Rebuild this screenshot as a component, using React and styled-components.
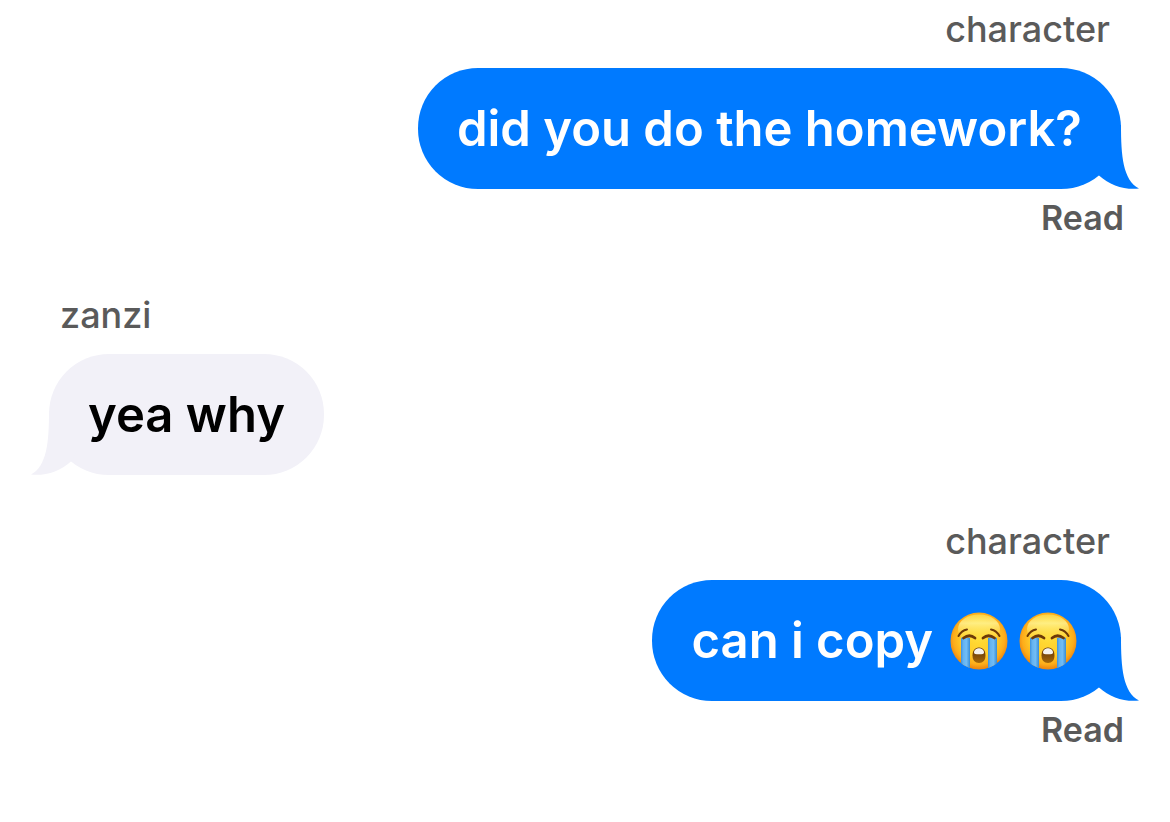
import React from "react";
import styled, { createGlobalStyle } from "styled-components";

const GlobalStyle = createGlobalStyle`
  body {
    margin: 0;
    background: #ffffff;
    font-family: Inter, "Liberation Sans", sans-serif;
    -webkit-font-smoothing: antialiased;
  }
`;

const Conversation = styled.main`
  display: flex;
  flex-direction: column;
  gap: 46px;
  padding: 9px 46px;
`;

const Message = styled.article`
  display: flex;
  flex-direction: column;
  align-items: ${(p) => (p.$sent ? "flex-end" : "flex-start")};
`;

const Sender = styled.span`
  padding: 0 14px;
  margin-bottom: 19px;
  color: #5a5a5a;
  font-size: 36px;
  font-weight: 500;
  line-height: 40px;
`;

const Bubble = styled.div`
  position: relative;
  box-sizing: border-box;
  margin: 0 3px;
  min-height: 121px;
  padding: 30px 39px;
  border-radius: 60px;
  background: ${(p) => (p.$sent ? "#007aff" : "#f2f1f8")};
  color: ${(p) => (p.$sent ? "#ffffff" : "#000000")};
`;

const BubbleText = styled.p`
  display: flex;
  align-items: center;
  gap: 12px;
  margin: 0;
  font-size: 49px;
  font-weight: 600;
  line-height: 61px;
`;

const TailShape = styled.svg`
  position: absolute;
  bottom: 0;
  ${(p) => (p.$sent ? "right: -18px;" : "left: -18px; transform: scaleX(-1);")}
  width: 60px;
  height: 64px;
  fill: ${(p) => (p.$sent ? "#007aff" : "#f2f1f8")};
`;

const Status = styled.span`
  margin: 9px 0 11px;
  color: #5a5a5a;
  font-size: 34px;
  font-weight: 600;
  line-height: 40px;
`;

const EmojiRow = styled.span`
  display: flex;
  gap: 11px;
  padding: 0 5px;
`;

const EmojiArt = styled.svg`
  display: block;
  width: 58px;
  height: 58px;
`;

function Tail({ sent }) {
  return (
    <TailShape $sent={sent} viewBox="0 0 60 64" aria-hidden="true">
      <path d="M42 0C42 31 44 55 60 63.6C45 65 31 60.5 20 50.5L14 40V0Z" />
    </TailShape>
  );
}

function CryingFace({ id }) {
  const face = `face-${id}`;
  const shine = `shine-${id}`;
  const tear = `tear-${id}`;
  const mouth = `mouth-${id}`;
  const clip = `clip-${id}`;
  return (
    <EmojiArt viewBox="0 0 58 58" role="img" aria-label="loudly crying face">
      <defs>
        <radialGradient id={face} cx="0.5" cy="0.46" r="0.55">
          <stop offset="0" stopColor="#ffdc35" />
          <stop offset="0.55" stopColor="#ffcd2a" />
          <stop offset="0.82" stopColor="#fdac1a" />
          <stop offset="1" stopColor="#e87d0e" />
        </radialGradient>
        <linearGradient id={shine} x1="0" y1="0" x2="0" y2="1">
          <stop offset="0" stopColor="#fff36a" stopOpacity="0.5" />
          <stop offset="0.3" stopColor="#fff9a0" stopOpacity="0.75" />
          <stop offset="1" stopColor="#ffe14a" stopOpacity="0" />
        </linearGradient>
        <linearGradient id={tear} x1="0" y1="0" x2="1" y2="0">
          <stop offset="0" stopColor="#3c91dc" />
          <stop offset="0.25" stopColor="#63b2f1" />
          <stop offset="0.6" stopColor="#72bdf5" />
          <stop offset="1" stopColor="#378cd5" />
        </linearGradient>
        <linearGradient id={mouth} x1="0" y1="0" x2="0" y2="1">
          <stop offset="0" stopColor="#5a2d08" />
          <stop offset="1" stopColor="#a66909" />
        </linearGradient>
        <clipPath id={clip}>
          <circle cx="29" cy="29" r="28.5" />
        </clipPath>
      </defs>
      <circle cx="29" cy="29" r="28.5" fill={`url(#${face})`} />
      <ellipse cx="29" cy="17" rx="21" ry="14.5" fill={`url(#${shine})`} />
      <g clipPath={`url(#${clip})`}>
        <path d="M11 26Q15 24 20 26V58H11Z" fill={`url(#${tear})`} />
        <path d="M38 26Q43 24 47 26V58H38Z" fill={`url(#${tear})`} />
      </g>
      <g fill="none" stroke="#6d3908" strokeLinecap="round">
        <path d="M8.5 24Q11.5 18.5 17 17.5" strokeWidth="2" />
        <path d="M49.5 24Q46.5 18.5 41 17.5" strokeWidth="2" />
        <path d="M13.5 26Q19.5 21.5 25 26" strokeWidth="2.8" />
        <path d="M33 26Q38.5 21.5 44.5 26" strokeWidth="2.8" />
      </g>
      <path
        d="M29 35.5C33.5 35.5 35.5 39.2 35.5 43.5C35.5 48.2 33 51 29 51C25 51 22.5 48.2 22.5 43.5C22.5 39.2 24.5 35.5 29 35.5Z"
        fill={`url(#${mouth})`}
      />
      <path
        d="M29 36.3C32.2 36.3 34 38.5 34 40.7C34 42 32.5 42.3 29 42.3C25.5 42.3 24 42 24 40.7C24 38.5 25.8 36.3 29 36.3Z"
        fill="#f5f2ed"
      />
    </EmojiArt>
  );
}

const messages = [
  { id: 1, sender: "character", sent: true, text: "did you do the homework?", status: "Read" },
  { id: 2, sender: "zanzi", sent: false, text: "yea why" },
  { id: 3, sender: "character", sent: true, text: "can i copy", faces: 2, status: "Read" },
];

export default function App() {
  return (
    <>
      <GlobalStyle />
      <Conversation>
        {messages.map((m) => (
          <Message key={m.id} $sent={m.sent}>
            <Sender>{m.sender}</Sender>
            <Bubble $sent={m.sent}>
              <Tail sent={m.sent} />
              <BubbleText>
                {m.text}
                {m.faces && (
                  <EmojiRow>
                    {Array.from({ length: m.faces }, (_, i) => (
                      <CryingFace key={i} id={`${m.id}-${i}`} />
                    ))}
                  </EmojiRow>
                )}
              </BubbleText>
            </Bubble>
            {m.status && <Status>{m.status}</Status>}
          </Message>
        ))}
      </Conversation>
    </>
  );
}
